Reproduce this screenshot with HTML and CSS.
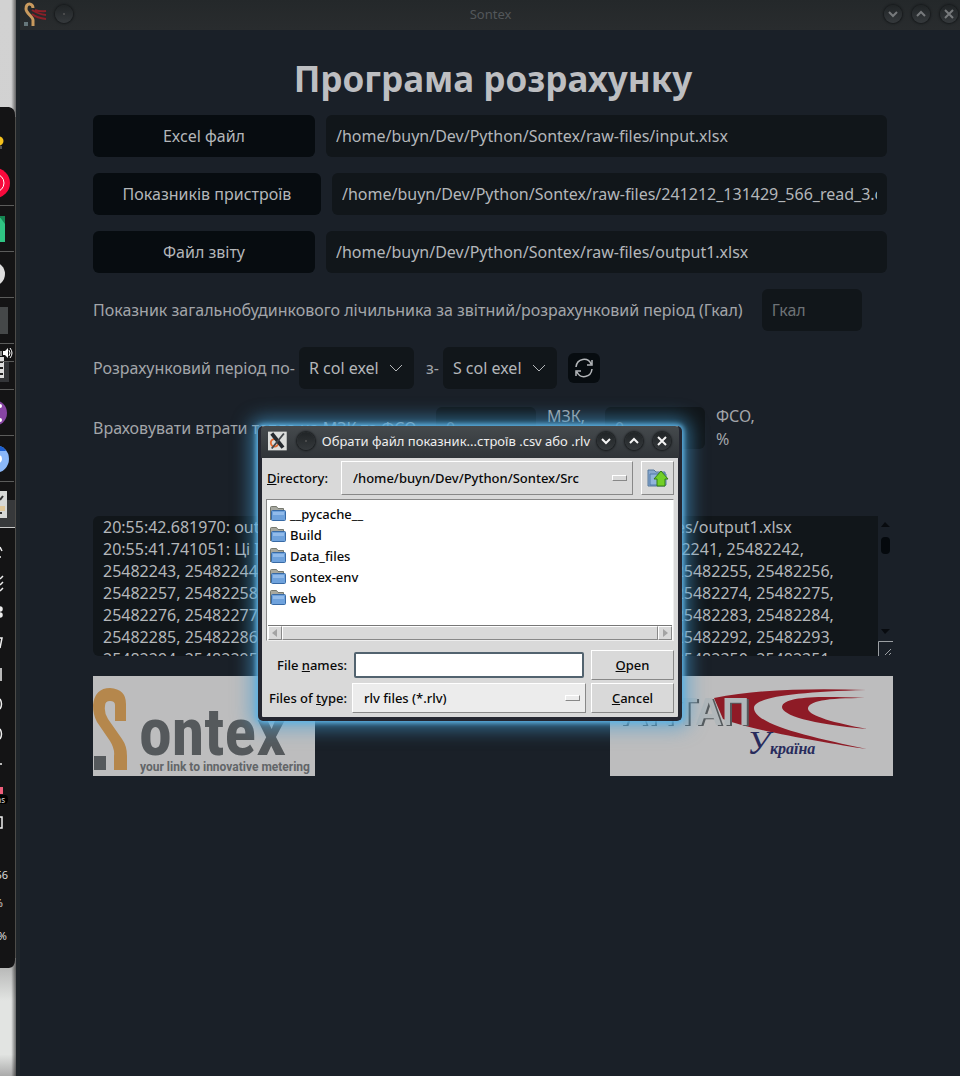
FILE: index.html
```html
<!DOCTYPE html>
<html lang="uk">
<head>
<meta charset="utf-8">
<title>Sontex</title>
<link rel="stylesheet" href="styles.css">
</head>
<body>
<div class="desktop">
  <aside class="strip">
    <svg class="dock" width="16" height="861" viewBox="0 107 16 861" aria-hidden="true">
      <path d="M0 107H9Q15 108 15 115V960Q15 967 9 968H0Z" fill="#141415"/>
      <path d="M15.500 117V958" stroke="#4c4b48"/>
      <circle cx="-1" cy="141" r="4.500" fill="#f6c21c"/><path d="M0 146h2v3h-2z" fill="#555"/>
      <circle cx="-5" cy="183" r="15" fill="#f80a3c"/><circle cx="-5" cy="183" r="9" fill="none" stroke="#fff"/>
      <path d="M0 216H5V242H0Z" fill="#2fc483"/><path d="M-1 216H5V224Z" fill="#168653"/>
      <circle cx="-7" cy="274" r="12" fill="#dedede"/>
      <path d="M0 307H8V334H0Z" fill="#454849"/>
      <path d="M0 361H9V382H0Z" fill="#333538"/><path d="M0 357H4V378H0Z" fill="#ddd"/><path d="M0 362H3M0 368H3M0 374H3" stroke="#222" stroke-width="2"/>
      <path d="M3 351H5L8 348V358L5 355H3Z" fill="#fff"/><path d="M9 350q2 3 0 6M10 348q4 5 0 10M1 351v5" fill="none" stroke="#fff"/>
      <circle cx="-6" cy="413" r="13" fill="#8745a3"/><circle cx="0" cy="406" r="2" fill="#fff"/><circle cx="0" cy="420" r="2" fill="#fff"/>
      <circle cx="-5" cy="459" r="14" fill="#8bb8f8"/><path d="M0 446Q4 447 6 451H0Z" fill="#1c5fd0"/><circle cx="-2" cy="459" r="4" fill="#fff"/>
      <path d="M0 500H15V527H0Z" fill="#37393b"/><path d="M0 491H7V518H0Z" fill="#d6d8d6"/><path d="M0 500L3 496M0 513H2" stroke="#333" stroke-width="2"/><path d="M0 506H5V511H0Z" fill="#dfc79a"/>
      <path d="M0 205.500H14M0 251.500H14M0 297.500H14M0 343.500H14M0 361.500H14M0 389.500H14M0 435.500H14M0 481.500H14" stroke="#5b5c5b"/>
      <path d="M0 527.500H15" stroke="#c8c8c8"/>
      <g fill="none" stroke="#eee" stroke-width="1.500">
        <path d="M0 547L2 551M0 557H1M0 579L3 576M0 585L3 582M0 591L3 588"/>
        <circle cx="0" cy="609" r="2" fill="#eee"/><circle cx="0" cy="615" r="2" fill="#eee"/>
        <path d="M0 638H2L0 648M1 668V681M0 699Q3 704 0 709M0 729Q3 734 0 739M0 764H2M-1 817H2V828H-1"/>
      </g>
      <path d="M0 787H3V794H0Z" fill="#ee5e7b"/><path d="M0 795H6Q8 796 8 799Q8 804 4 804H0Z" fill="#000"/>
      <g class="dock-text"><text x="5" y="803" class="tiny">ms</text><text x="8" y="879">56</text><text x="3" y="907">%</text><text x="7" y="940">%</text></g>
    </svg>
  </aside>

  <main class="app">
    <header class="titlebar">
      <div class="title-side">
        <svg width="24" height="24" viewBox="0 0 24 24" aria-hidden="true"><path d="M9 8Q15 12 23 13M9 12Q14 16 23 17M12 8Q17 10 23 9" fill="none" stroke="#8b2028" stroke-width="2"/><path d="M3 7C3 0 10 1 10 6M3 7C3 11 10 15 10 18V24" fill="none" stroke="#c99a5e" stroke-width="3"/><path d="M1 20h4v4H1z" fill="#66767a"/></svg>
        <button class="round" aria-label="Меню"><svg viewBox="0 0 18 18"><circle cx="9" cy="9" r="1"/></svg></button>
      </div>
      <span class="app-name">Sontex</span>
      <div class="title-side end">
        <button class="round" aria-label="Згорнути"><svg viewBox="0 0 18 18"><path d="M5 7L9 11L13 7"/></svg></button>
        <button class="round" aria-label="Розгорнути"><svg viewBox="0 0 18 18"><path d="M5 11L9 7L13 11"/></svg></button>
        <button class="round" aria-label="Закрити"><svg viewBox="0 0 18 18"><path d="M5 5L13 13M13 5L5 13"/></svg></button>
      </div>
    </header>

    <section class="content">
      <h1>Програма розрахунку</h1>
      <div class="row"><button class="pick">Excel файл</button><input class="field path" aria-label="Excel файл" value="/home/buyn/Dev/Python/Sontex/raw-files/input.xlsx"></div>
      <div class="row"><button class="pick wide">Показників пристроїв</button><input class="field path" aria-label="Показників пристроїв" value="/home/buyn/Dev/Python/Sontex/raw-files/241212_131429_566_read_3.csv"></div>
      <div class="row"><button class="pick">Файл звіту</button><input class="field path" aria-label="Файл звіту" value="/home/buyn/Dev/Python/Sontex/raw-files/output1.xlsx"></div>
      <div class="row meter"><label for="gcal">Показник загальнобудинкового лічильника за звітний/розрахунковий період (Гкал)</label><input id="gcal" class="field num" placeholder="Гкал"></div>
      <div class="row period">
        <label for="col-to">Розрахунковий період по-</label>
        <div class="pickbox"><select id="col-to" class="field"><option>R col exel</option></select><svg width="14" height="8" viewBox="0 0 14 8"><path d="M1 1L7 7L13 1"/></svg></div>
        <label for="col-from" class="from">з-</label>
        <div class="pickbox"><select id="col-from" class="field"><option>S col exel</option></select><svg width="14" height="8" viewBox="0 0 14 8"><path d="M1 1L7 7L13 1"/></svg></div>
        <button class="refresh" aria-label="Оновити"><svg width="20" height="20" viewBox="0 0 20 20"><path d="M2 9C3 0 14 -1 17 6M18 2V7H13M18 11C17 20 6 21 3 14M2 18V13H7"/></svg></button>
      </div>
      <div class="row losses">
        <label for="mzk" class="loss-label">Враховувати втрати тепла на МЗК та ФСО</label><input id="mzk" class="field num" placeholder="0"><label for="mzk" class="unit">МЗК, %</label>
        <input id="fso" class="field num" placeholder="0"><label for="fso" class="unit">ФСО, %</label>
      </div>

      <div class="log">
        <textarea readonly wrap="off" aria-label="Журнал">20:55:42.681970: output reports file: /home/buyn/Dev/Python/Sontex/raw-files/output1.xlsx
20:55:41.741051: Ці ID немає у файлі показників пристроїв: 25482240, 25482241, 25482242,
25482243, 25482244, 25482245, 25482246, 25482247, 25482248, 25482254, 25482255, 25482256,
25482257, 25482258, 25482259, 25482260, 25482261, 25482262, 25482273, 25482274, 25482275,
25482276, 25482277, 25482278, 25482279, 25482280, 25482281, 25482282, 25482283, 25482284,
25482285, 25482286, 25482287, 25482288, 25482289, 25482290, 25482291, 25482292, 25482293,
25482294, 25482295, 25482296, 25482297, 25482298, 25482299, 25482349, 25482350, 25482351,</textarea>
        <svg class="bar" width="15" height="140" viewBox="0 0 15 140" aria-hidden="true"><path d="M3 11L7 6L12 11ZM3 113H12L7 118Z" fill="#080b0f"/><rect x="3" y="21" width="9" height="17" rx="4" fill="#05090d"/><path d="M.5 140V125.500H15" fill="none" stroke="#9b9fa3"/><path d="M7 139L13 133M11 139L13 137" stroke="#9b9fa3"/></svg>
      </div>

      <div class="logos">
        <svg class="logo" width="222" height="100" viewBox="0 0 222 100" role="img" aria-label="Sontex">
          <path d="M33 45H22V29Q22 25 17 25Q12 25 12 30Q11 37 15 43L29 63Q34 70 34 80V94H21V80Q22 73 17 65L4 46Q0 39 0 29Q2 12 17 12Q33 13 33 28Z" fill="#b5874c"/>
          <path d="M1 80h12v14H1z" fill="#55595c"/>
          <text x="46" y="79" class="wordmark">ontex</text>
          <text x="47" y="95" class="tagline">your link to innovative metering</text>
        </svg>
        <svg class="logo" width="283" height="100" viewBox="0 0 283 100" role="img" aria-label="АПТАП Україна">
          <path d="M104 22C150 13 205 12 256 14C180 16 144 22 144 32C144 48 198 61 257 73C215 67 137 53 113 43Z" fill="#8e1b26"/>
          <path d="M255 22C216 22 198 25 198 33C199 40 225 47 257 53C200 48 172 39 172 31C173 20 211 20 255 22Z" fill="#8e1b26"/>
          <text x="10" y="49" class="brand">АПТАП</text>
          <text x="137" y="78" class="country"><tspan class="cap">У</tspan>країна</text>
        </svg>
      </div>
    </section>
  </main>

  <section class="dialog" role="dialog" aria-label="Обрати файл">
    <header class="dialog-title">
      <svg width="20" height="20" viewBox="0 0 20 20" aria-hidden="true"><path d="M0 0H20V20H0Z" fill="#dcdedc"/><circle cx="7" cy="12" r="4" fill="none" stroke="#e36d35" stroke-width="2"/><path d="M4 2L16 17" stroke="#262b30" stroke-width="4"/><path d="M17 2L4 18" stroke="#42474b" stroke-width="2"/></svg>
      <button class="round" aria-label="Меню"><svg viewBox="0 0 18 18"><circle cx="9" cy="9" r="1"/></svg></button>
      <span class="dialog-name">Обрати файл показник...строїв .csv або .rlv</span>
      <button class="round" aria-label="Згорнути"><svg viewBox="0 0 18 18"><path d="M5 7L9 11L13 7"/></svg></button>
      <button class="round" aria-label="Розгорнути"><svg viewBox="0 0 18 18"><path d="M5 11L9 7L13 11"/></svg></button>
      <button class="round" aria-label="Закрити"><svg viewBox="0 0 18 18"><path d="M5 5L13 13M13 5L5 13"/></svg></button>
    </header>
    <div class="dialog-body">
      <div class="dir-row">
        <label for="dir"><u>D</u>irectory:</label>
        <div class="combo"><select id="dir"><option>/home/buyn/Dev/Python/Sontex/Src</option></select><i></i></div>
        <button class="raised up" aria-label="На рівень вище"><svg width="22" height="20" viewBox="0 0 22 20"><path d="M1 18V2H7L9 4H18V18Z" fill="#87a8cf" stroke="#56799c"/><path d="M3 17V6H19V17Z" fill="#91b5dc" stroke="#527ba8"/><path d="M14 3L21 11H18V18H10V11H7Z" fill="#72cf27" stroke="#347e14"/></svg></button>
      </div>
      <div class="files">
        <ul>
          <li><svg class="folder" viewBox="0 0 16 15"><path d="M.5 14V1.500Q.5.500 1.500.500H6.500L8 2.500H13.500V5" fill="#a7a89f" stroke="#77796f"/><rect x="1.500" y="4.500" width="14" height="10" rx="1" fill="#6fa2dc" stroke="#386aa5"/><path d="M3 6H14V9H3Z" fill="#92bbea"/></svg>__pycache__</li>
          <li><svg class="folder" viewBox="0 0 16 15"><path d="M.5 14V1.500Q.5.500 1.500.500H6.500L8 2.500H13.500V5" fill="#a7a89f" stroke="#77796f"/><rect x="1.500" y="4.500" width="14" height="10" rx="1" fill="#6fa2dc" stroke="#386aa5"/><path d="M3 6H14V9H3Z" fill="#92bbea"/></svg>Build</li>
          <li><svg class="folder" viewBox="0 0 16 15"><path d="M.5 14V1.500Q.5.500 1.500.500H6.500L8 2.500H13.500V5" fill="#a7a89f" stroke="#77796f"/><rect x="1.500" y="4.500" width="14" height="10" rx="1" fill="#6fa2dc" stroke="#386aa5"/><path d="M3 6H14V9H3Z" fill="#92bbea"/></svg>Data_files</li>
          <li><svg class="folder" viewBox="0 0 16 15"><path d="M.5 14V1.500Q.5.500 1.500.500H6.500L8 2.500H13.500V5" fill="#a7a89f" stroke="#77796f"/><rect x="1.500" y="4.500" width="14" height="10" rx="1" fill="#6fa2dc" stroke="#386aa5"/><path d="M3 6H14V9H3Z" fill="#92bbea"/></svg>sontex-env</li>
          <li><svg class="folder" viewBox="0 0 16 15"><path d="M.5 14V1.500Q.5.500 1.500.500H6.500L8 2.500H13.500V5" fill="#a7a89f" stroke="#77796f"/><rect x="1.500" y="4.500" width="14" height="10" rx="1" fill="#6fa2dc" stroke="#386aa5"/><path d="M3 6H14V9H3Z" fill="#92bbea"/></svg>web</li>
        </ul>
        <div class="hscroll"><span><svg viewBox="0 0 8 8"><path d="M6 0V8L1 4Z"/></svg></span><span class="thumb"></span><span><svg viewBox="0 0 8 8"><path d="M2 0V8L7 4Z"/></svg></span></div>
      </div>
      <div class="form">
        <label for="names">File <u>n</u>ames:</label><input id="names" type="text"><button class="raised"><u>O</u>pen</button>
        <label for="kind">Files of <u>t</u>ype:</label><div class="combo light"><select id="kind"><option>rlv files (*.rlv)</option></select><i></i></div><button class="raised"><u>C</u>ancel</button>
      </div>
    </div>
  </section>
</div>
</body>
</html>
```
FILE: styles.css
```css
* { box-sizing: border-box; }
body { margin: 0; background: #1a2028; font-family: "Noto Sans", sans-serif; font-size: 16px; line-height: 22px; color: #a3a6aa; }
button, input, select, textarea { font: inherit; color: inherit; margin: 0; border: 0; }
select { appearance: none; }
button { padding: 0; }

.desktop { display: grid; grid-template-columns: 16px minmax(0, 1fr); min-height: 100vh; position: relative; overflow: hidden; }
.strip { padding-top: 107px; background: linear-gradient(90deg, transparent 70%, #0008), linear-gradient(#d2d2d2 0, #cfcfcf 89%, #b9bab9 90%, #e2e4e2 93%, #e2e4e2 98%, #aaa); }
.dock { display: block; }
.dock-text { font-size: 11px; fill: #ddd; text-anchor: end; }
.dock-text .tiny { font-size: 8px; }

.app { border-left: 4px solid #20262b; background: #1a2028; }
.titlebar { display: grid; grid-template-columns: 1fr auto 1fr; align-items: center; height: 30px; padding: 0 8px 2px 3px; margin-right: -6px; background: linear-gradient(#24282a, #292c2e); font-size: 13px; color: #53575a; }
.title-side { display: flex; align-items: center; gap: 8px; }
.title-side.end { justify-content: flex-end; gap: 10px; }
.round { width: 18px; height: 18px; border-radius: 50%; background: linear-gradient(#202426, #35393c); box-shadow: 0 0 2px 1px #15181a; flex: none; }
.round svg { display: block; fill: none; stroke: #777a7c; stroke-width: 2; }
.round circle { fill: #555; stroke: none; }

.content { max-width: 873px; padding: 27px 0 28px 73px; }
h1 { margin: 0 0 14px; font-size: 35px; line-height: 44px; font-weight: 700; text-align: center; color: #bdbec1; }
.row { display: flex; align-items: center; min-height: 42px; margin: 0 6px 16px 0; }
.pick { width: 222px; height: 42px; margin-right: 11px; border-radius: 6px; background: #070c10; color: #b4b7ba; flex: none; }
.pick.wide { width: 228px; }
.field { height: 42px; padding: 0 10px; border-radius: 6px; background: #11161a; color: #b4b7ba; }
.path { flex: 1; min-width: 0; }
.num { width: 100px; flex: none; }
.field::placeholder { color: #6d7276; opacity: 1; }
.meter { gap: 19px; }
.period { gap: 4px; }
.pickbox { display: grid; align-items: center; }
.pickbox > * { grid-area: 1 / 1; }
.pickbox select { padding-right: 35px; }
.pickbox svg { justify-self: end; margin-right: 11px; fill: none; stroke: #b4b7ba; pointer-events: none; }
.from { margin-left: 8px; }
.refresh { display: grid; place-items: center; width: 32px; height: 30px; margin-left: 7px; border-radius: 6px; background: #070c10; }
.refresh svg { fill: none; stroke: #b4b7ba; stroke-width: 1.5; }
.losses { gap: 11px; }
.loss-label { width: 332px; white-space: nowrap; flex: none; }
.unit { width: 47px; line-height: 23px; }

.log { display: flex; margin-top: 65px; height: 140px; }
.log textarea { flex: 1; min-width: 0; height: 140px; padding: 0 10px; border-radius: 6px 0 0 6px; overflow: hidden; resize: none; background: #11161a; color: #b4b7ba; line-height: 22px; }
.logos { display: flex; justify-content: space-between; margin-top: 20px; }
.logo { display: block; background: #bdbdbe; }
.wordmark { font: 700 66px "Roboto Condensed", Roboto, sans-serif; fill: #55595c; }
.tagline { font: 700 12px Roboto, sans-serif; fill: #626568; }
.brand { font: 700 38px "Liberation Sans", sans-serif; fill: #b1b7ba; filter: drop-shadow(2px 1px 0 #555a5d); }
.country { font: italic 700 16px "Liberation Serif", serif; fill: #282b5c; }
.cap { font-size: 34px; font-weight: 400; }

.dialog { position: absolute; left: 258px; top: 426px; width: 424px; border: 4px solid #242630; border-top: 0; border-radius: 5px; background: #d9d9d9; color: #080808; font-size: 13px; font-weight: 500; line-height: 20px; box-shadow: 0 0 5px 2px #5fb4e6, 0 0 18px 8px #459fd499; }
.dialog-title { display: flex; align-items: center; gap: 10px; height: 32px; padding: 0 8px 2px 7px; margin: 0 -1px; background: linear-gradient(#454a4d, #303438); border-radius: 4px 4px 0 0; color: #eee; font-weight: 400; }
.dialog-name { flex: 1; white-space: nowrap; text-align: center; margin: 0 -3px; }
.dialog-title .round svg { stroke: #f5f5f5; }
.dialog-body { padding: 3px 4px 4px 5px; }
.dir-row { display: flex; align-items: center; gap: 8px; height: 34px; }
.dir-row label { width: 66px; }
.combo { display: grid; align-items: center; flex: 1; min-width: 0; }
.combo > * { grid-area: 1 / 1; }
.combo select { width: 100%; height: 34px; padding: 0 11px; background: #d9d9d9; }
.combo select, .raised { border: 1px solid #888; border-top-color: #fff; border-left-color: #fff; border-radius: 0; }
.combo i { justify-self: end; width: 15px; height: 6px; margin-right: 6px; border: 1px solid #888; border-top-color: #fff; border-left-color: #fff; pointer-events: none; }
.raised { background: #d9d9d9; }
.up { display: grid; place-items: center; width: 33px; height: 34px; }
.files { margin: 4px 0 9px -1px; background: #fff; border: 1px solid #888; border-right-color: #eee; border-bottom-color: #eee; }
.files ul { height: 125px; margin: 0; padding: 3px; list-style: none; }
.files li { display: flex; align-items: center; gap: 4px; height: 21px; }
.folder { width: 16px; height: 15px; flex: none; }
.hscroll { display: grid; grid-template-columns: 14px 1fr 14px; height: 15px; margin: 0 1px; background: #c3c3c3; border-top: 1px solid #777; }
.hscroll span { display: grid; place-items: center; background: #d9d9d9; border: 1px solid #888; border-top-color: #fff; border-left-color: #fff; }
.hscroll svg { width: 8px; height: 8px; fill: #a3a3a3; }
.form { display: grid; grid-template-columns: 80px 1fr 83px; column-gap: 5px; row-gap: 3px; align-items: center; }
.form label { text-align: right; white-space: nowrap; }
.form input { width: auto; min-width: 0; height: 26px; margin: 0 2px; background: #fff; border: 2px solid #52636f; border-radius: 2px; }
.form .raised { height: 30px; }
.light select { height: 30px; background: #ececec; }
```
